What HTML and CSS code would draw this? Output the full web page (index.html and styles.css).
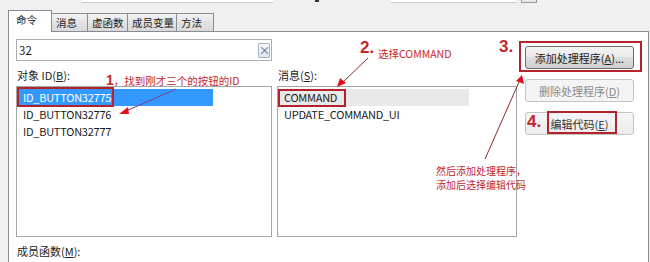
FILE: index.html
```html
<!DOCTYPE html>
<html>
<head>
<meta charset="utf-8">
<link rel="stylesheet" href="styles.css">
</head>
<body>
<div class="page">
  <div class="topstrip">
    <span class="piece p1"></span>
    <span class="mark m1"></span>
    <span class="piece p2"></span>
    <span class="piece p3"></span>
  </div>
  <div class="tabs">
    <div class="tab active w44">命令</div>
    <div class="tab w37">消息</div>
    <div class="tab w41">虚函数</div>
    <div class="tab w50">成员变量</div>
    <div class="tab w38">方法</div>
  </div>
  <div class="panel">
    <div class="grid">
      <div class="search">
        <span class="search-text">32</span>
        <span class="clear">×</span>
      </div>
      <div class="label l1">对象 ID(<u>B</u>):</div>
      <div class="label l2">消息(<u>S</u>):</div>
      <div class="list list1">
        <div class="item selected-blue">ID_BUTTON32775</div>
        <div class="item">ID_BUTTON32776</div>
        <div class="item">ID_BUTTON32777</div>
      </div>
      <div class="list list2">
        <div class="item selected-gray">COMMAND</div>
        <div class="item">UPDATE_COMMAND_UI</div>
      </div>
      <div class="buttons">
        <div class="btn primary">添加处理程序(<u>A</u>)...</div>
        <div class="btn disabled">删除处理程序(<u>D</u>)</div>
        <div class="btn light">编辑代码(<u>E</u>)</div>
      </div>
    </div>
    <div class="label bottom">成员函数(<u>M</u>):</div>
  </div>

  <div class="overlay">
    <svg class="arrows" width="650" height="262" viewBox="0 0 650 262">
      <line x1="176" y1="89" x2="126" y2="111" stroke="#7d3f86" stroke-width="1"/>
      <polygon points="119,114 128,107 129,114" fill="#e0101c"/>
      <line x1="368" y1="58" x2="343" y2="82" stroke="#8b2a2a" stroke-width="1"/>
      <polygon points="337,87 340,78 346,83" fill="#e0101c"/>
      <line x1="485" y1="159" x2="519" y2="82" stroke="#8b2a2a" stroke-width="1"/>
      <polygon points="522,75 516,81 524,84" fill="#e0101c"/>
    </svg>
    <div class="box b1"></div>
    <div class="box b2"></div>
    <div class="box b3"></div>
    <div class="box b4"></div>
    <div class="note n1"><span class="num1">1</span>，找到刚才三个的按钮的ID</div>
    <div class="note big n2">2.</div>
    <div class="note n2t">选择COMMAND</div>
    <div class="note big n3">3.</div>
    <div class="note big n4">4.</div>
    <div class="note small n5">然后添加处理程序，</div>
    <div class="note small n6">添加后选择编辑代码</div>
  </div>
</div>
</body>
</html>
```
FILE: styles.css
```css
* { box-sizing: border-box; }
html, body { margin: 0; padding: 0; }
body {
  background: #f0f0f0;
  font-family: "Noto Sans CJK SC", "Noto Sans", sans-serif;
  font-size: 11px;
  color: #1e1e1e;
}
.page {
  position: relative;
  width: 650px;
  height: 262px;
  overflow: hidden;
}
u { text-decoration: underline; text-underline-offset: 1px; }

.topstrip { display: flex; height: 3px; }
.piece { display: block; height: 3px; background: #fff; border-bottom: 1px solid #c8c8c8; }
.p1 { margin-left: 82px; width: 191px; }
.mark { display: block; width: 4px; height: 2px; background: #333; }
.m1 { margin-left: 42px; }
.p2 { margin-left: 72px; width: 125px; }
.p3 { margin-left: 5px; width: 16px; background: #e8e8e8; border: 1px solid #999; border-top: none; }

.tabs {
  display: flex;
  align-items: flex-end;
  margin: 7px 0 0 8px;
  height: 21px;
  position: relative;
  z-index: 2;
}
.tab {
  height: 18px;
  border: 1px solid #898c95;
  border-bottom: none;
  margin-left: -1px;
  background: linear-gradient(#f3f3f3, #e3e3e3 50%, #d9d9d9);
  display: flex;
  align-items: center;
  justify-content: flex-start;
  padding-left: 4px;
  font-size: 10.5px;
  white-space: nowrap;
  color: #222;
  line-height: 1;
  padding-top: 1px;
}
.tab.active {
  margin-left: 0;
  height: 22px;
  margin-bottom: -1px;
  background: #fff;
  padding-top: 0;
  padding-left: 7px;
  padding-bottom: 3px;
  z-index: 1;
}
.w44 { width: 44px; }
.w37 { width: 37px; }
.w41 { width: 41px; }
.w50 { width: 50px; }
.w38 { width: 38px; }

.panel {
  margin-left: 8px;
  width: 641px;
  height: 240px;
  background: #fff;
  border: 1px solid #898c95;
  padding: 7px 0 0 7px;
  position: relative;
  z-index: 1;
}
.grid {
  display: grid;
  grid-template-columns: 256px 240px 112px;
  grid-template-rows: 22px 25px 151px;
  column-gap: 5px;
}
.search {
  grid-column: 1; grid-row: 1;
  border: 1px solid #abadb3;
  display: flex;
  align-items: center;
  justify-content: space-between;
  padding: 0 1px 0 2px;
  font-size: 11.5px;
}
.clear {
  width: 12px; height: 15px;
  border: 1px solid #a8b4c4;
  background: linear-gradient(#f7f9fc, #dfe6ef);
  color: #4a5a78;
  font-size: 11px;
  line-height: 12px;
  text-align: center;
  border-radius: 1px;
}
.label {
  padding: 6px 0 0 1px;
  line-height: 16px;
  font-size: 11px;
  color: #222;
}
.l1 { grid-column: 1; grid-row: 2; }
.l2 { grid-column: 2; grid-row: 2; }
.list {
  grid-row: 3;
  border: 1px solid #a5a5a5;
  padding: 2px 0 0 1px;
}
.list1 { grid-column: 1; }
.list2 { grid-column: 2; }
.item {
  height: 17px;
  line-height: 17px;
  padding-left: 5px;
  font-size: 11px;
  color: #1a1a1a;
  letter-spacing: -0.25px;
}
.selected-blue { background: #3399ff; color: #fff; width: 195px; }
.selected-gray { background: #e9e9e9; width: 190px; }

.buttons {
  grid-column: 3;
  grid-row: 1 / span 3;
  margin-left: 3px;
  padding-top: 7px;
  display: flex;
  flex-direction: column;
  gap: 10px;
}
.btn {
  height: 23px;
  border: 1px solid #707070;
  border-radius: 3px;
  display: flex;
  align-items: center;
  justify-content: center;
  font-size: 11px;
  color: #222;
}
.primary {
  background: linear-gradient(#f3f3f3, #ebebeb 45%, #dddddd 50%, #cfcfcf);
  border-color: #6e6e6e;
}
.disabled {
  background: #f4f4f4;
  border-color: #c2c4c6;
  color: #8a8a8a;
}
.light {
  background: linear-gradient(#f6f6f6, #ececec);
  border-color: #c4c4c4;
  color: #333;
}
.label.bottom { padding-top: 6px; }

.overlay { position: absolute; inset: 0; z-index: 5; pointer-events: none; }
.arrows { position: absolute; left: 0; top: 0; }
.box { position: absolute; border: 2px solid #b4222c; }
.b1 { left: 17px; top: 87px; width: 97px; height: 20px; }
.b2 { left: 278px; top: 89px; width: 68px; height: 18px; }
.b3 { left: 519px; top: 41px; width: 123px; height: 31px; }
.b4 { left: 547px; top: 111px; width: 70px; height: 23px; }
.note {
  position: absolute;
  color: #c1272d;
  font-size: 10.5px;
  line-height: 12px;
  white-space: nowrap;
}
.note.small { font-size: 10px; line-height: 14px; }
.big { font-size: 17px; font-weight: bold; line-height: 18px; font-family: "Liberation Sans", sans-serif; }
.num1 { font-size: 14px; font-weight: bold; font-family: "Liberation Sans", sans-serif; }
.n1 { left: 106px; top: 74px; }
.n2 { left: 360px; top: 39px; }
.n2t { left: 378px; top: 48px; }
.n3 { left: 499px; top: 38px; }
.n4 { left: 527px; top: 113px; }
.n5 { left: 436px; top: 164px; }
.n6 { left: 436px; top: 178px; }
```
